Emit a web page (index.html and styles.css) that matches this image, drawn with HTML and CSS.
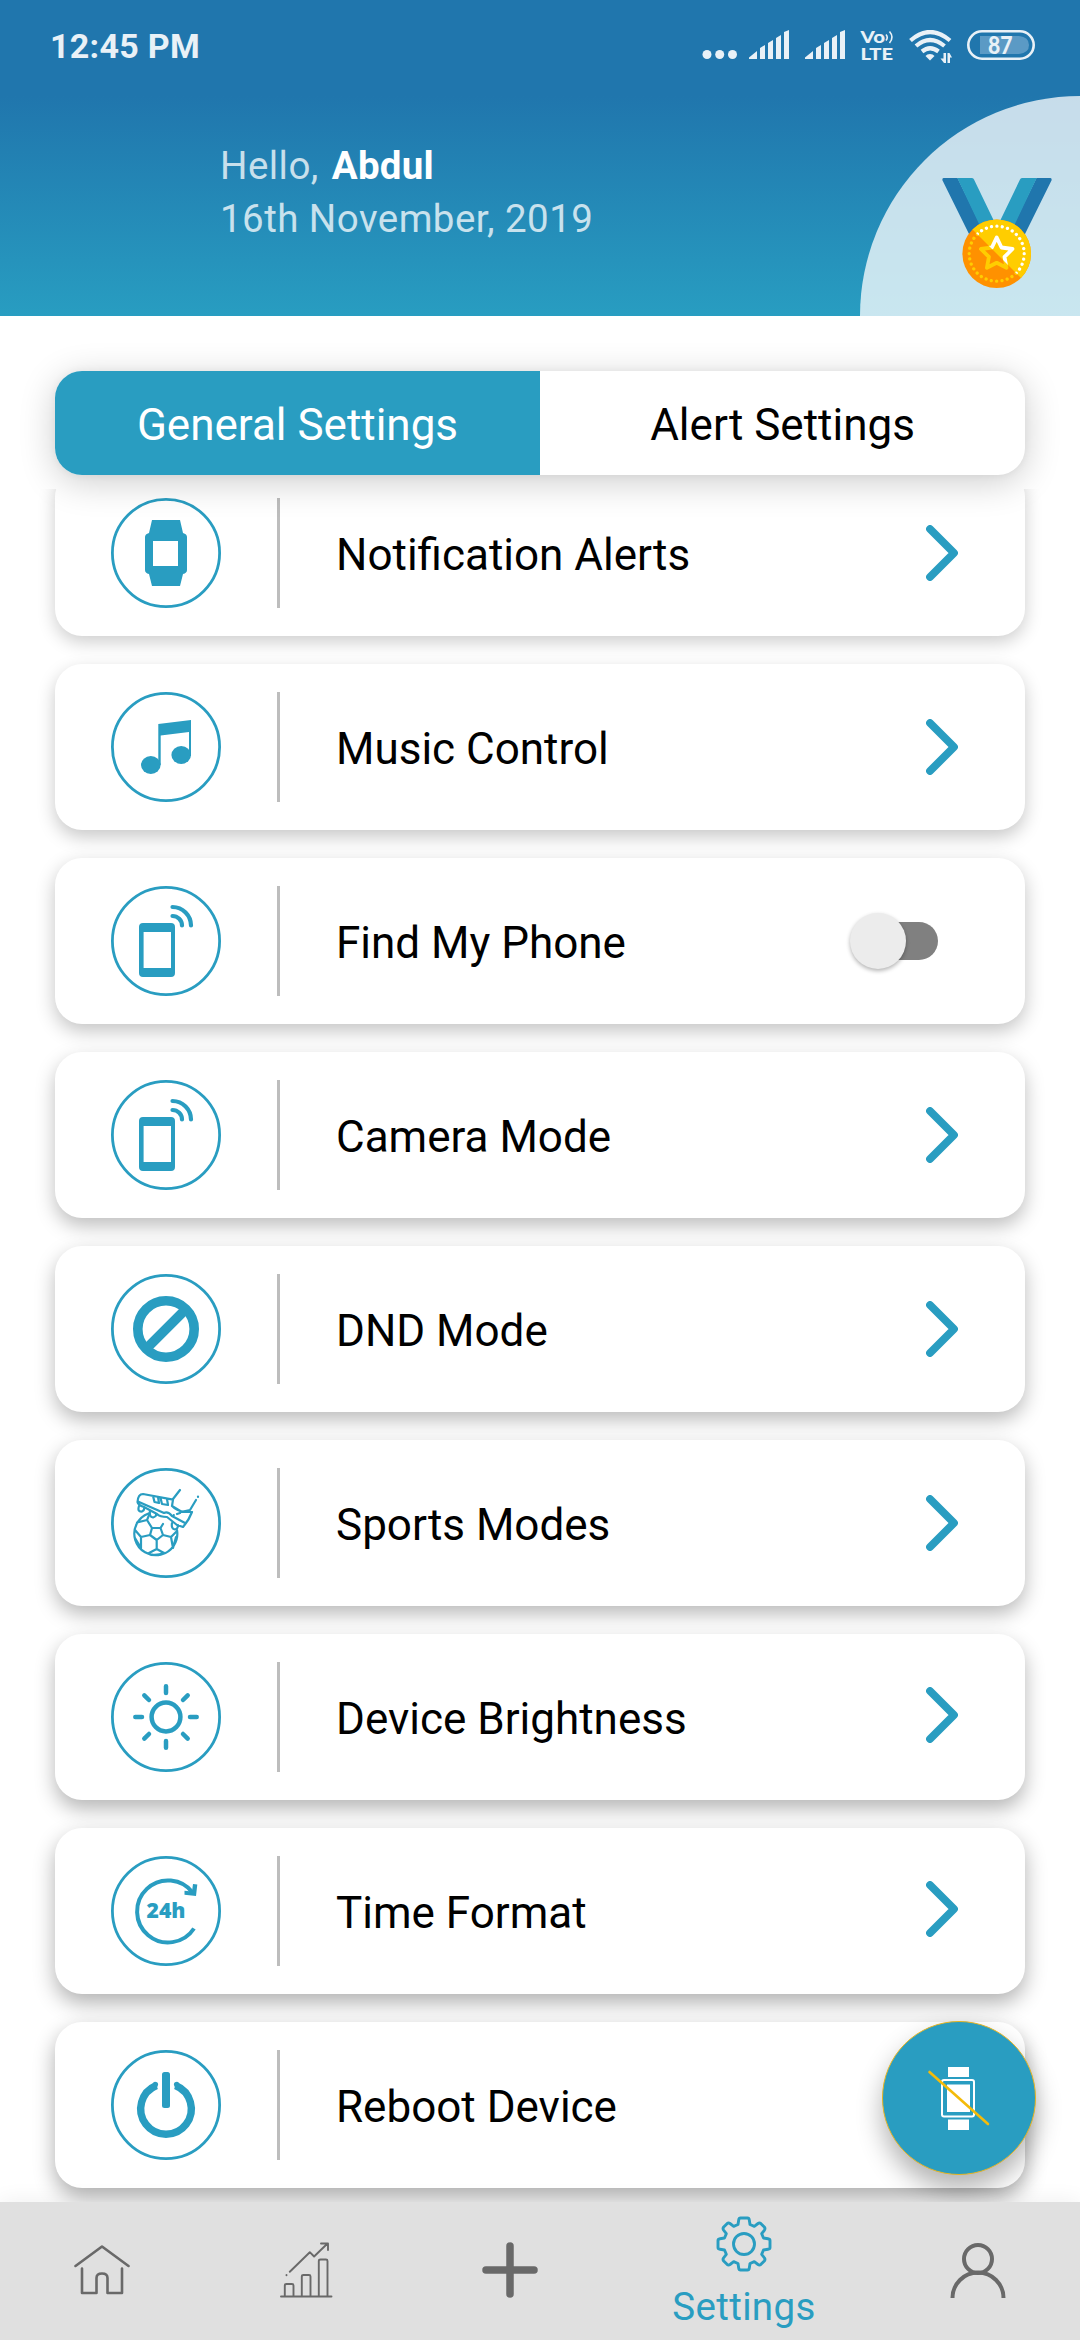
FILE: index.html
```html
<!DOCTYPE html>
<html lang="en">
<head>
<meta charset="utf-8">
<title>General Settings</title>
<link rel="stylesheet" href="styles.css">
</head>
<body>
<svg class="defs" width="0" height="0">
  <symbol id="chevron" viewBox="0 0 32 56"><path d="M4 4L28 28L4 52" fill="none" stroke="currentColor" stroke-width="7.800" stroke-linecap="round" stroke-linejoin="round"/></symbol>
  <symbol id="signal" viewBox="0 0 40 30"><path d="M0 29V27.500L8 21V29ZM11 18L16 15V29H11ZM19 13L24 10V29H19ZM27 8L32 5V29H27ZM35 2L40 0V29H35Z" fill="currentColor"/></symbol>
  <symbol id="ring" viewBox="0 0 110 110"><circle cx="55" cy="55" r="53.600" fill="none" stroke="currentColor" stroke-width="2.800"/></symbol>
  <symbol id="phone" viewBox="0 0 110 110">
    <path fill="currentColor" fill-rule="evenodd" d="M32 37H60Q64 37 64 41V87Q64 91 60 91H32Q28 91 28 87V41Q28 37 32 37ZM32.600 46V82H60V46Z"/>
    <path fill="none" stroke="currentColor" stroke-width="4.200" stroke-linecap="round" d="M61.500 21A18.500 18.500 0 0 1 80 39.500M61.500 30A9.500 9.500 0 0 1 71 39.500"/>
  </symbol>
</svg>

<header class="header">
  <div class="status">
    <span class="time">12:45 PM</span>
    <div class="status-icons">
      <svg class="dots" width="36" height="30" viewBox="0 0 36 30"><g fill="currentColor"><circle cx="5" cy="24.500" r="4.500"/><circle cx="17.700" cy="24.500" r="4.500"/><circle cx="30.500" cy="24.500" r="4.500"/></g></svg>
      <svg class="signal" width="40" height="30"><use href="#signal"/></svg>
      <svg class="signal" width="40" height="30"><use href="#signal"/></svg>
      <svg class="volte" width="34" height="31" viewBox="0 0 34 31">
        <g fill="currentColor" class="volte-text"><text x="0.500" y="12.800" textLength="24.500" lengthAdjust="spacingAndGlyphs">Vo</text><text x="0.500" y="29.800" textLength="32.500" lengthAdjust="spacingAndGlyphs">LTE</text></g>
        <path fill="none" stroke="currentColor" stroke-width="1.600" d="M26 4.500Q28.500 7.300 26 10.500M29.500 1.500Q34.500 7.300 29.500 13"/>
      </svg>
      <svg class="wifi" width="43" height="34" viewBox="0 0 43 34">
        <g fill="none" stroke="currentColor" stroke-width="4.200"><path d="M1.500 10.500Q21 -6.500 41 10.500M7 16Q21 4 35.500 16M13 21.500Q21 15 29.500 21.500"/></g>
        <path fill="currentColor" d="M21 24Q24 24 25.500 26L21 30.500L16.500 26Q18 24 21 24Z"/>
        <path fill="currentColor" d="M34.500 23H37V33H35L31.500 28.500H34.500ZM38.500 33V23H40.500L43 27.500H41V33Z"/>
      </svg>
      <svg class="battery" width="68" height="30" viewBox="0 0 68 30">
        <rect x="1.300" y="1.300" width="65.400" height="27.400" rx="13.700" fill="none" stroke="currentColor" stroke-width="2.600"/>
        <path d="M13 6H52Q62 7 62 15T52 24H13Z" fill="#5b9ac5"/>
        <text class="battery-text" x="21" y="24" textLength="24.500" lengthAdjust="spacingAndGlyphs" fill="currentColor">87</text>
      </svg>
    </div>
  </div>
  <div class="greeting">
    <p>Hello, <strong>Abdul</strong></p>
    <p>16th November, 2019</p>
  </div>
  <div class="award">
    <svg width="114" height="114" viewBox="940 176 114 114">
      <defs><clipPath id="upper"><path d="M958 215L1036 293V200H958Z"/></clipPath></defs>
      <path fill="#2076ad" d="M943.500 178H957.500L981 226L970 236L942.300 180Q942.300 178 943.500 178ZM1050.500 178H1036.500L1013 226L1024 236L1051.700 180Q1051.700 178 1050.500 178Z"/>
      <path fill="#299dc1" d="M957.300 178H972Q973.500 178 974 179.500L993.500 220L979.500 225ZM1036.700 178H1022Q1020.500 178 1020 179.500L1000.500 220L1014.500 225Z"/>
      <circle cx="996.700" cy="253.700" r="34.300" fill="#ff9100"/>
      <circle cx="996.700" cy="253.700" r="34.300" fill="#ffcd00" clip-path="url(#upper)"/>
      <g fill="none" stroke="#ffcd00">
        <circle cx="996.700" cy="253.700" r="27.500" stroke-width="3.300" stroke-linecap="round" stroke-dasharray=".01 5.390"/>
        <path stroke-width="3.800" stroke-linejoin="round" d="M996.700 237.500L1001.500 247.500L1012.500 249L1004.500 256.800L1006.500 267.800L996.700 262.800L986.900 267.800L988.900 256.800L980.900 249L991.900 247.500Z"/>
      </g>
      <g clip-path="url(#upper)" fill="none" stroke="#fff">
        <circle cx="996.700" cy="253.700" r="27.500" stroke-width="3.300" stroke-linecap="round" stroke-dasharray=".01 5.390"/>
        <path stroke-width="3.800" stroke-linejoin="round" d="M996.700 237.500L1001.500 247.500L1012.500 249L1004.500 256.800L1006.500 267.800L996.700 262.800L986.900 267.800L988.900 256.800L980.900 249L991.900 247.500Z"/>
      </g>
    </svg>
  </div>
</header>

<main class="main">
  <div class="tabs">
    <div class="tab active">General Settings</div>
    <div class="tab">Alert Settings</div>
  </div>
  <div class="list">
    <div class="card">
      <svg class="icon"><use href="#ring"/><path fill="currentColor" fill-rule="evenodd" d="M41 22H69L72 35Q76 36 76 39V72Q76 75 72 76L69 88H41L38 76Q34 75 34 72V39Q34 36 38 35ZM42 43V68H67V43Z"/></svg>
      <span class="rule"></span><span class="label">Notification Alerts</span><svg class="chevron"><use href="#chevron"/></svg>
    </div>
    <div class="card s2">
      <svg class="icon"><use href="#ring"/><g fill="currentColor"><path d="M47.300 32L80 28V64H78V40L49.700 43.500V73H47.300Z"/><ellipse cx="39.800" cy="73" rx="9.800" ry="9"/><ellipse cx="70.200" cy="63" rx="9.800" ry="9"/></g></svg>
      <span class="rule"></span><span class="label">Music Control</span><svg class="chevron"><use href="#chevron"/></svg>
    </div>
    <div class="card s3">
      <svg class="icon"><use href="#ring"/><use href="#phone"/></svg>
      <span class="rule"></span><span class="label">Find My Phone</span><span class="toggle"><span class="thumb"></span></span>
    </div>
    <div class="card s4">
      <svg class="icon"><use href="#ring"/><use href="#phone"/></svg>
      <span class="rule"></span><span class="label">Camera Mode</span><svg class="chevron"><use href="#chevron"/></svg>
    </div>
    <div class="card s5">
      <svg class="icon"><use href="#ring"/><g fill="none" stroke="currentColor" stroke-width="9.600"><circle cx="55" cy="55" r="28.200"/><path d="M36 74L74 36"/></g></svg>
      <span class="rule"></span><span class="label">DND Mode</span><svg class="chevron"><use href="#chevron"/></svg>
    </div>
    <div class="card s6">
      <svg class="icon"><use href="#ring"/>
        <g fill="none" stroke="currentColor" stroke-width="2.200" stroke-linejoin="round" stroke-linecap="round">
          <path d="M37.500 45.500A21.500 21.500 0 1 0 66 62M41 60H49.500L52 67L45.700 72L39 67ZM41 60L36 52L38.500 46M36 52L26 54.500M49.500 60L52 56M39 67L30 69L24 62M30 69V80M45.700 72V81L38 85M45.700 81L53 85M52 67L60 69L66 63M60 69L62 80M24 70L30 80M65 69L62 80M38 86Q45 88 53 85"/>
          <path d="M62 31.700L32 26Q27 26 26.500 34Q27 37 33 39L46 46Q49 49 56 49L66 57L72 59Q78 52 81 44L71 44L61 38ZM28 34L53 45Q57 43 61 48L74 55M42 28L43.500 34L48 35L47 29M49.500 30L51 36L57 37L56 31M62 31L69 22M61 38Q66 43 72 43.500L79 42L85 32M28 38Q26 44 31 43.500Q34 42 33 39M39 43Q38 49 42 49.500Q46 48 45 46M61 55Q60 61 64 61.500Q67 61 67 57M66 46L69 45M87 28.500V29M62.800 47V47.300"/>
        </g></svg>
      <span class="rule"></span><span class="label">Sports Modes</span><svg class="chevron"><use href="#chevron"/></svg>
    </div>
    <div class="card s7">
      <svg class="icon"><use href="#ring"/><g fill="none" stroke="currentColor" stroke-width="4.500" stroke-linecap="round"><circle cx="55" cy="55" r="14.400"/><path d="M55 24.300V31M55 79V85.700M24.300 55H31M79 55H85.700M33.300 33.300L38 38M72 72L76.700 76.700M76.700 33.300L72 38M38 72L33.300 76.700"/></g></svg>
      <span class="rule"></span><span class="label">Device Brightness</span><svg class="chevron raised"><use href="#chevron"/></svg>
    </div>
    <div class="card s8">
      <svg class="icon"><use href="#ring"/><path fill="none" stroke="currentColor" stroke-width="4" d="M83 72.500A31 31 0 1 1 82 37"/><path fill="currentColor" d="M73.500 34.700V38.800L85 40L86.300 28.500L82 28L81 35.500Z"/><text class="hours" x="35.500" y="61.700" textLength="39" lengthAdjust="spacingAndGlyphs" fill="currentColor">24h</text></svg>
      <span class="rule"></span><span class="label">Time Format</span><svg class="chevron raised"><use href="#chevron"/></svg>
    </div>
    <div class="card s9">
      <svg class="icon"><use href="#ring"/><rect x="51" y="22" width="8" height="36" rx="2.500" fill="currentColor"/><path fill="none" stroke="currentColor" stroke-width="7.400" stroke-linecap="butt" d="M45.500 35.500A25.300 25.300 0 1 0 64.500 35.500"/><path fill="none" stroke="currentColor" stroke-width="5.500" stroke-linecap="round" d="M43.500 36.500L44.300 34.500M66.500 36.500L65.700 34.500"/></svg>
      <span class="rule"></span><span class="label">Reboot Device</span>
    </div>
  </div>
  <button class="fab" type="button" aria-label="Watch disconnected">
    <svg width="64" height="66" viewBox="928 2065 64 66"><g fill="#fff"><rect x="949" y="2067" width="21" height="10"/><rect x="949" y="2119.500" width="21" height="10.500"/><rect x="948" y="2084.500" width="23" height="27.500"/></g><rect x="943" y="2080" width="32" height="36.500" rx="2" fill="none" stroke="#fff" stroke-width="2"/><path d="M930.500 2072L989 2124" stroke="#f4bb0a" stroke-width="2.600" stroke-linecap="round"/></svg>
  </button>
</main>

<nav class="nav">
  <a class="nav-item"><svg width="56" height="56" viewBox="73.500 2243 56 56" fill="none" stroke="currentColor" stroke-width="2.600" stroke-linecap="round" stroke-linejoin="round"><path d="M75 2267L101.500 2247.500L128 2267M81.500 2269.500V2294H96V2279Q96 2274.500 101.500 2274.500T107 2279V2294H121.500V2269.500"/></svg></a>
  <a class="nav-item"><svg width="56" height="56" viewBox="277.500 2242.500 56 56" fill="none" stroke="currentColor" stroke-width="1.900" stroke-linecap="round" stroke-linejoin="round"><path d="M280.500 2297H331M284.300 2296V2286Q284.300 2284.500 286 2284.500H291.500Q293 2284.500 293 2286V2296M301.300 2296V2277Q301.300 2275.500 303 2275.500H308.500Q310 2275.500 310 2277V2296M318.300 2296V2261.500Q318.300 2260 320 2260H325.500Q327 2260 327 2261.500V2296M289.300 2272.300L309.300 2252.700L313.600 2257L327 2244M320.500 2244H327.500V2250.500M286 2275.500V2275.700"/></svg></a>
  <a class="nav-item"><svg width="56" height="56" viewBox="0 0 56 56"><path d="M4 28H52M28 4V52" fill="none" stroke="currentColor" stroke-width="7.500" stroke-linecap="round"/></svg></a>
  <a class="nav-item current"><svg width="56" height="56" viewBox="-28 -28 56 56" fill="none" stroke="currentColor" stroke-width="2.900" stroke-linejoin="round"><circle r="10.500"/><path d="M-3.500 -26H3.500Q5 -26 5.300 -24L6 -19.500L10.300 -17.700L14 -20.500Q15.500 -21.500 17 -20.300L20.300 -17Q21.500 -15.500 20.500 -14L17.700 -10.300L19.500 -6L24 -5.300Q26 -5 26 -3.500V3.500Q26 5 24 5.300L19.500 6L17.700 10.300L20.500 14Q21.500 15.500 20.300 17L17 20.300Q15.500 21.500 14 20.500L10.300 17.700L6 19.500L5.300 24Q5 26 3.500 26H-3.500Q-5 26 -5.300 24L-6 19.500L-10.300 17.700L-14 20.500Q-15.500 21.500 -17 20.300L-20.300 17Q-21.500 15.500 -20.500 14L-17.700 10.300L-19.500 6L-24 5.300Q-26 5 -26 3.500V-3.500Q-26 -5 -24 -5.300L-19.500 -6L-17.700 -10.300L-20.500 -14Q-21.500 -15.500 -20.300 -17L-17 -20.300Q-15.500 -21.500 -14 -20.500L-10.300 -17.700L-6 -19.500L-5.300 -24Q-5 -26 -3.500 -26Z"/></svg><span>Settings</span></a>
  <a class="nav-item"><svg width="56" height="56" viewBox="0 0 56 56" fill="none" stroke="currentColor" stroke-width="4"><circle cx="28" cy="17" r="14"/><path d="M2.500 56A25.500 25.500 0 0 1 53.500 56"/></svg></a>
</nav>
</body>
</html>
```

FILE: styles.css
```css
* { box-sizing: border-box; }
body {
  margin: 0;
  width: 1080px;
  height: 2340px;
  overflow: hidden;
  display: flex;
  flex-direction: column;
  background: #fff;
  font-family: Roboto, "Liberation Sans", sans-serif;
  font-size: 44px;
  color: #000;
}
.defs { position: absolute; }
svg { display: block; }

.header {
  position: relative;
  height: 316px;
  flex: none;
  background: linear-gradient(#2076ad 96px, #289dc1 316px);
}
.status {
  display: flex;
  justify-content: space-between;
  height: 96px;
  padding: 26px 45px 0 50px;
  color: #e9f1f7;
}
.time { font-size: 34px; font-weight: 700; line-height: 40px; letter-spacing: .3px; }
.status-icons { display: flex; align-items: flex-start; padding-top: 4px; }
.dots { margin-right: 11px; }
.signal { margin-right: 16px; }
.signal + .volte { margin-right: 15px; margin-left: -1px; }
.volte, .battery { overflow: visible; }
.volte-text { font: 900 17.500px Lato, sans-serif; }
.wifi { margin-right: 15px; }
.battery-text { font: 900 24px Lato, sans-serif; }
.greeting { padding: 43px 0 0 220px; color: rgba(255, 255, 255, .75); }
.greeting p { margin: 0; font-size: 38.500px; line-height: 53px; letter-spacing: .45px; }
.greeting strong { color: #fff; margin-left: 3px; letter-spacing: .2px; }
.award {
  position: absolute;
  right: 0;
  bottom: 0;
  width: 220px;
  height: 220px;
  padding: 80px 0 0 80px;
  border-top-left-radius: 220px;
  background: rgba(255, 255, 255, .75);
}

.main { position: relative; flex: 1; min-height: 0; display: flex; flex-direction: column; }
.tabs {
  position: relative;
  z-index: 1;
  flex: none;
  display: flex;
  height: 104px;
  margin: 55px 55px 14px;
  border-radius: 27px;
  background: #fff;
  box-shadow: 0 7px 36px rgba(0, 0, 0, .2), 0 0 8px rgba(0, 0, 0, .05);
}
.tab { flex: 1; padding-top: 4px; display: flex; align-items: center; justify-content: center; }
.tab.active { background: #299dc1; color: #fff; border-radius: 27px 0 0 27px; }
.list { flex: 1; min-height: 0; overflow: hidden; padding: 0 55px; }
.card {
  display: flex;
  align-items: center;
  height: 166px;
  margin-bottom: 28px;
  padding: 0 67px 0 56px;
  border-radius: 27px;
  background: #fff;
  box-shadow: 0 6px 18px rgba(0, 0, 0, .2);
}
.card:first-child { margin-top: -19px; }
.s2 { box-shadow: 0 7px 18px rgba(0, 0, 0, .22); }
.s3 { box-shadow: 0 7px 19px rgba(0, 0, 0, .24); }
.s4 { box-shadow: 0 8px 19px rgba(0, 0, 0, .26); }
.s5 { box-shadow: 0 8px 20px rgba(0, 0, 0, .27); }
.s6 { box-shadow: 0 8px 20px rgba(0, 0, 0, .28); }
.s7 { box-shadow: 0 9px 20px rgba(0, 0, 0, .29); }
.s8 { box-shadow: 0 9px 21px rgba(0, 0, 0, .31); }
.s9 { box-shadow: 0 9px 21px rgba(0, 0, 0, .33); }
.icon { width: 110px; height: 110px; flex: none; color: #299dc1; }
.hours { font: 800 21px "Open Sans", sans-serif; }
.rule { width: 3px; height: 110px; margin: 0 56px; background: #bdbdbd; }
.label { flex: 1; padding-top: 4px; white-space: nowrap; }
.chevron { width: 32px; height: 56px; flex: none; color: #299dc1; }
.chevron.raised { margin-bottom: 5px; }
.toggle {
  display: flex;
  align-items: center;
  width: 77px;
  height: 38px;
  margin-right: 20px;
  border-radius: 19px;
  background: #808080;
}
.thumb {
  width: 56px;
  height: 56px;
  margin-left: -11px;
  border-radius: 50%;
  background: #ececec;
  box-shadow: 0 2px 4px rgba(0, 0, 0, .3);
}
.fab {
  position: absolute;
  right: 44px;
  bottom: 27px;
  width: 154px;
  height: 154px;
  padding: 0;
  display: flex;
  align-items: center;
  justify-content: center;
  border: 1.500px solid #e6b422;
  border-radius: 50%;
  background: #299dc1;
  box-shadow: 0 14px 26px rgba(0, 0, 0, .3);
}

.nav {
  position: relative;
  flex: none;
  display: flex;
  height: 138px;
  background: #e0e0e0;
  color: #696969;
  box-shadow: 0 0 22px rgba(0, 0, 0, .07);
}
.nav-item {
  width: 204px;
  display: flex;
  flex-direction: column;
  align-items: center;
  padding-top: 40px;
}
.nav-item.current {
  width: 264px;
  padding-top: 14px;
  color: #299dc1;
  font-size: 38.500px;
  line-height: 46px;
  letter-spacing: .35px;
}
.nav-item.current span { padding-top: 12px; }
```
